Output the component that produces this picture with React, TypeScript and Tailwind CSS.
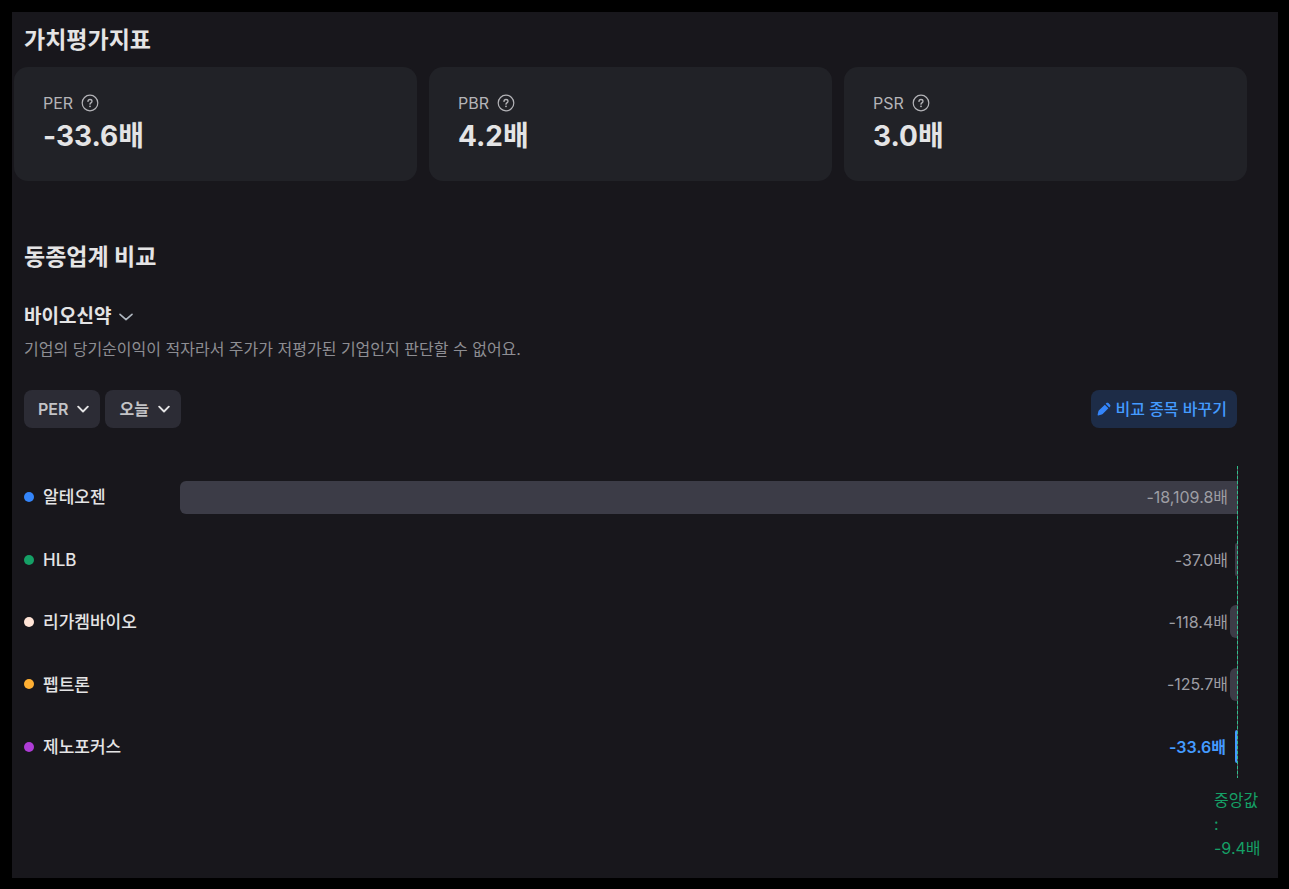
const metrics = [
  { label: 'PER', value: '-33.6배' },
  { label: 'PBR', value: '4.2배' },
  { label: 'PSR', value: '3.0배' },
];

const companies = [
  { name: '알테오젠', value: -18109.8, text: '-18,109.8배', dot: 'bg-[#3485fa]' },
  { name: 'HLB', value: -37.0, text: '-37.0배', dot: 'bg-[#15a066]' },
  { name: '리가켐바이오', value: -118.4, text: '-118.4배', dot: 'bg-[#ffe4d6]' },
  { name: '펩트론', value: -125.7, text: '-125.7배', dot: 'bg-[#ffaf33]' },
  { name: '제노포커스', value: -33.6, text: '-33.6배', dot: 'bg-[#ae3cd6]', current: true },
];

const maxValue = Math.max(...companies.map((c) => Math.abs(c.value)));

function HelpIcon() {
  return (
    <svg width="18" height="18" viewBox="0 0 18 18" fill="none" stroke="currentColor" aria-hidden="true">
      <circle cx="9" cy="9" r="7.8" strokeWidth="1.2" />
      <path
        d="M7 7.4C7 6.2 7.9 5.500 9 5.500s2 .7 2 1.800c0 .8-.5 1.200-1.100 1.600-.6.4-.9.7-.9 1.300"
        strokeWidth="1.3"
        strokeLinecap="round"
      />
      <circle cx="9" cy="12.3" r="0.9" fill="currentColor" stroke="none" />
    </svg>
  );
}

function PencilIcon() {
  return (
    <svg width="14" height="14" viewBox="0 0 14 14" fill="#3485fa" aria-hidden="true">
      <path d="M7.800 2.700l3.600 3.600-5.700 5.700c-.3.300-.6.500-1 .6l-3.500.8c-.4.1-.7-.2-.6-.6l.8-3.500c.1-.4.3-.7.6-1z" />
      <path d="M8.700 1.800l.7-.7c.6-.6 1.400-.6 2 0l1.600 1.600c.6.6.6 1.400 0 2l-.7.7z" />
    </svg>
  );
}

function ChevronIcon() {
  return (
    <svg width="12" height="12" viewBox="0 0 12 12" fill="none" stroke="#e4e4e5" aria-hidden="true">
      <path d="M1.200 3.700L6 8.500l4.800-4.800" strokeWidth="1.9" strokeLinecap="round" strokeLinejoin="round" />
    </svg>
  );
}

function MetricCard({ label, value }: { label: string; value: string }) {
  return (
    <div className="rounded-[14px] bg-[#212227] px-[29px] py-6">
      <div className="flex items-center gap-2 text-[16px] leading-6 text-[#b4b4b8]">
        {label}
        <button type="button" aria-label={`${label} 설명`}>
          <HelpIcon />
        </button>
      </div>
      <p className="text-[28px] leading-[42px] font-bold">{value}</p>
    </div>
  );
}

function FilterButton({ label }: { label: string }) {
  return (
    <button
      type="button"
      className="flex h-[38px] items-center gap-[9px] rounded-lg bg-[#2c2c35] pr-[11px] pl-[14px] text-[16px] font-semibold text-[#c3c3c6]"
    >
      {label}
      <ChevronIcon />
    </button>
  );
}

export default function App() {
  return (
    <div className="flex min-h-screen bg-black pt-3 pr-[11px] pb-[11px] pl-3 font-['Inter','Noto_Sans_CJK_KR',sans-serif] text-[#e4e4e5]">
      <main lang="ko" className="min-w-0 flex-1 bg-[#18171c] pt-3 pr-[41px] pb-[18px] pl-3">
        <section>
          <h2 className="text-[23px] leading-8 font-bold">가치평가지표</h2>
          <div className="-mx-[10px] mt-[11px] grid grid-cols-3 gap-3">
            {metrics.map((m) => (
              <MetricCard key={m.label} {...m} />
            ))}
          </div>
        </section>

        <section className="mt-[60px]">
          <h2 className="text-[23px] leading-8 font-bold">동종업계 비교</h2>
          <button type="button" className="mt-[30px] flex items-center gap-2 text-[19px] leading-7 font-bold">
            바이오신약
            <svg width="14" height="14" viewBox="0 0 14 14" fill="none" stroke="#b0b8c1" aria-hidden="true">
              <path d="M1 4.300l6 5.400 6-5.400" strokeWidth="1.6" strokeLinecap="round" strokeLinejoin="round" />
            </svg>
          </button>
          <p className="mt-1.5 text-[16px] leading-6 text-[#8e8e93]">
            기업의 당기순이익이 적자라서 주가가 저평가된 기업인지 판단할 수 없어요.
          </p>

          <div className="mt-[29px] flex items-center justify-between">
            <div className="flex gap-[5px]">
              <FilterButton label="PER" />
              <FilterButton label="오늘" />
            </div>
            <button
              type="button"
              className="flex h-[38px] items-center gap-1 rounded-lg bg-[#1d2c47] pr-[10px] pl-1.5 text-[16px] font-medium text-[#449bff]"
            >
              <PencilIcon />
              비교 종목 바꾸기
            </button>
          </div>

          <div className="relative mt-[38px] grid h-[312px] grid-rows-5">
            {companies.map((c) => (
              <div key={c.name} className="flex items-center">
                <div className="flex w-[156px] shrink-0 items-center gap-[9px] text-[17px] font-medium">
                  <span className={`size-[10px] rounded-full ${c.dot}`} />
                  <span className="pt-0.5">{c.name}</span>
                </div>
                <div className="grid flex-1 items-center">
                  <div
                    className={`col-start-1 row-start-1 h-[33px] justify-self-end rounded-l-[6px] ${c.current ? 'bg-[#449bff]' : 'bg-[#3c3c47]'}`}
                    style={{ width: `${(Math.abs(c.value) / maxValue) * 100}%` }}
                  />
                  <span
                    className={`col-start-1 row-start-1 justify-self-end text-[16px] ${c.current ? 'pr-[11px] font-semibold text-[#449bff]' : 'pr-[9px] text-[#9e9ea4]'}`}
                  >
                    {c.text}
                  </span>
                </div>
              </div>
            ))}
            {/* median line */}
            <div className="absolute inset-y-0 -right-px w-px bg-[repeating-linear-gradient(#2fc08a_0_3px,#565660_3px_5px)]" />
          </div>
          <div className="mt-[10px] -mr-[23px] flex justify-end">
            <p className="w-[46px] text-[16px] leading-6 whitespace-nowrap text-[#15a066]">
              중앙값
              <br />:<br />
              -9.4배
            </p>
          </div>
        </section>
      </main>
    </div>
  );
}
